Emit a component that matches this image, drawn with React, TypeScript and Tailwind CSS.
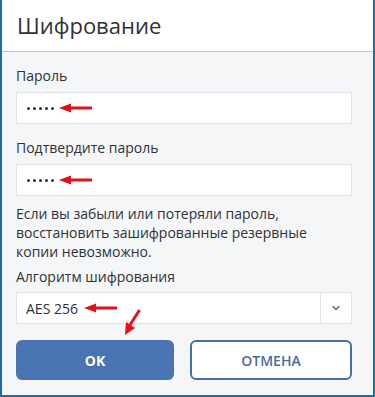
import { ChevronDown } from "lucide-react";

const font = { fontFamily: "'Open Sans', 'Noto Sans', sans-serif" };

const LeftArrow = ({ x, y }: { x: number; y: number }) => (
  <svg
    className="absolute pointer-events-none"
    style={{ left: x, top: y - 6 }}
    width="34"
    height="12"
    viewBox="0 0 34 12"
  >
    <path d="M10 4.5 H33 V7.5 H10 Z" fill="#e3101b" />
    <path d="M0 6 L12 1.5 L12 10.5 Z" fill="#e3101b" />
  </svg>
);

const Dots = () => (
  <div className="flex items-center gap-[3px] px-[10px]">
    {[0, 1, 2, 3, 4].map((i) => (
      <span key={i} className="w-[3px] h-[3px] rounded-full bg-[#2e3238]" />
    ))}
  </div>
);

const App = () => {
  return (
    <div
      className="relative w-[375px] h-[397px] border-x-2 border-b-2 border-[#1c6ea8] bg-[#f4f6f8] text-[#2e3238] overflow-hidden"
      style={font}
    >
      <div className="h-[52px] bg-white border-b border-[#bdc6cf] flex items-center px-[15px]">
        <h1 className="text-[22px] leading-none pb-[2px]">Шифрование</h1>
      </div>

      <div className="pl-[14px] pr-[21px] pt-[14px] flex flex-col">
        <label className="text-[14px] leading-[20px] mb-[6px]">Пароль</label>
        <div className="h-[32px] bg-white border border-[#dfe3e8] flex items-center">
          <Dots />
        </div>

        <label className="text-[14px] leading-[20px] mt-[14px] mb-[6px]">
          Подтвердите пароль
        </label>
        <div className="h-[32px] bg-white border border-[#dfe3e8] flex items-center">
          <Dots />
        </div>

        <p className="text-[14px] leading-[19px] mt-[8px] pr-[30px]">
          Если вы забыли или потеряли пароль, восстановить зашифрованные
          резервные копии невозможно.
        </p>

        <label className="text-[14px] leading-[20px] mt-[6px] mb-[5px]">
          Алгоритм шифрования
        </label>
        <div className="h-[32px] bg-white border border-[#dfe3e8] flex items-stretch text-[14px]">
          <div className="flex-1 flex items-center px-[9px]">AES 256</div>
          <div className="w-[31px] border-l border-[#dfe3e8] flex items-center justify-center text-[#4a6fa8]">
            <ChevronDown size={12} strokeWidth={3} />
          </div>
        </div>

        <div className="mt-[16px] flex gap-[16px]">
          <button
            type="button"
            className="flex-1 h-[40px] rounded-[6px] bg-[#4a73b2] text-white text-[14px] font-bold"
          >
            OK
          </button>
          <button
            type="button"
            className="flex-1 h-[40px] rounded-[6px] border-2 border-[#4a6fa8] bg-white text-[#4a6aa2] text-[14px] font-semibold"
          >
            ОТМЕНА
          </button>
        </div>
      </div>

      <LeftArrow x={57} y={108} />
      <LeftArrow x={57} y={180} />
      <LeftArrow x={82} y={308} />
      <svg
        className="absolute pointer-events-none"
        style={{ left: 118, top: 308 }}
        width="24"
        height="30"
        viewBox="0 0 24 30"
      >
        <path d="M19.5 2 L10 17" stroke="#e3101b" strokeWidth="3" />
        <path d="M5 27 L6 14 L15 20 Z" fill="#e3101b" />
      </svg>
    </div>
  );
};

export default App;
